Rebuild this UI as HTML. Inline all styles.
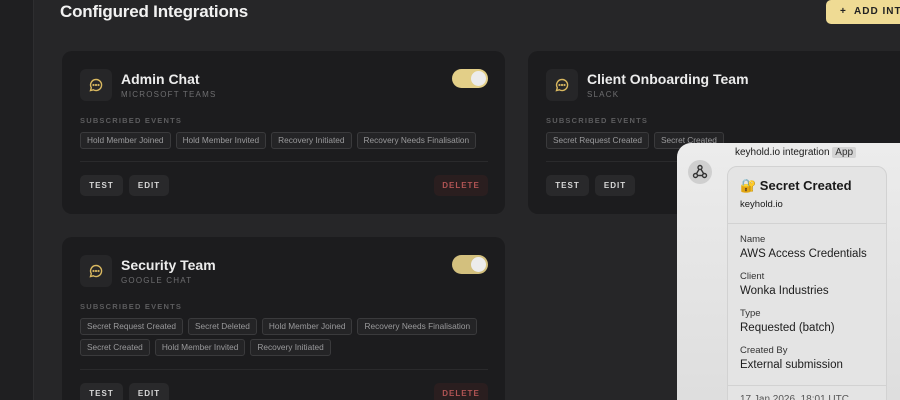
<!DOCTYPE html>
<html><head><meta charset="utf-8"><style>
*{box-sizing:border-box;margin:0;padding:0}
html,body{width:900px;height:400px;overflow:hidden}
body{background:#262628;font-family:"Liberation Sans",sans-serif;position:relative}
.side{position:absolute;left:0;top:0;width:34px;height:400px;background:#1f1f21;border-right:1px solid #2e2e30}
h1{position:absolute;left:60px;top:2px;font-size:17px;color:#f2f2f2;font-weight:bold;letter-spacing:-0.2px}
.add{position:absolute;left:826px;top:0;width:74px;height:24px;background:#efdb94;border-radius:5px 0 0 5px;color:#222;font-size:10px;font-weight:bold;letter-spacing:1px;padding:6px 0 0 14px;overflow:hidden;white-space:nowrap}
.card{position:absolute;background:#1c1c1e;border-radius:10px;overflow:hidden}
.ic{position:absolute;left:18px;top:18px;width:32px;height:32px;background:#262628;border-radius:6px}
.ic svg{position:absolute;left:8px;top:8px}
.tt{position:absolute;left:59px;top:20px;font-size:14px;font-weight:bold;color:#ececec}
.st{position:absolute;left:59px;top:39px;font-size:8px;color:#6e6e70;letter-spacing:1.2px}
.tg{position:absolute;left:390px;top:18px;width:36px;height:19px;background:#e3cf88;border-radius:10px}
.tg:after{content:"";position:absolute;right:2px;top:2px;width:15px;height:15px;border-radius:50%;background:#ececec}
.se{position:absolute;left:18px;font-size:7.5px;color:#5c5c5e;letter-spacing:1.2px;font-weight:bold}
.tags{position:absolute;left:18px;width:420px;font-size:0}
.t{display:inline-block;height:17px;border:1px solid #3a3a3c;background:#242426;border-radius:3px;color:#9a9a9c;font-size:8.3px;line-height:15px;padding:0 6px;margin:0 5px 4px 0}
.div{position:absolute;left:18px;width:408px;height:1px;background:#2a2a2c}
.b{position:absolute;height:21px;background:#29292b;border-radius:5px;color:#d8d8d8;font-size:8px;font-weight:bold;letter-spacing:1px;text-align:center;line-height:21px}
.del{background:#2a1e1f;color:#b05454}
.panel{position:absolute;left:677px;top:143px;width:223px;height:257px;background:linear-gradient(#ececec,#dedede);border-radius:14px 0 0 0;color:#1a1a1a;overflow:hidden}
.inner{position:absolute;left:50px;top:23px;width:160px;height:260px;border:1px solid #d2d2d2;border-radius:10px;background:#e4e4e4}
.lbl{font-size:9.5px;color:#333}
.val{font-size:11.5px;color:#1c1c1c;margin-bottom:11px;margin-top:3px}
</style></head><body>
<div class="side"></div>
<h1>Configured Integrations</h1>
<div class="add">+&nbsp; ADD INT</div>

<div class="card" style="left:62px;top:51px;width:443px;height:163px">
 <div class="ic"><svg width="16" height="16" viewBox="0 0 16 16" fill="none" stroke="#d9b860" stroke-width="1.4"><path d="M8 2.5a5.5 5.5 0 1 1-2.6 10.3L2.5 13.5l.8-2.8A5.5 5.5 0 0 1 8 2.5z"/><circle cx="5.5" cy="8" r=".4" fill="#d9b860"/><circle cx="8" cy="8" r=".4" fill="#d9b860"/><circle cx="10.5" cy="8" r=".4" fill="#d9b860"/></svg></div>
 <div class="tt">Admin Chat</div><div class="st">MICROSOFT TEAMS</div><div class="tg"></div>
 <div class="se" style="top:65px">SUBSCRIBED EVENTS</div>
 <div class="tags" style="top:81px"><span class="t">Hold Member Joined</span><span class="t">Hold Member Invited</span><span class="t">Recovery Initiated</span><span class="t">Recovery Needs Finalisation</span></div>
 <div class="div" style="top:110px"></div>
 <div class="b" style="left:18px;top:124px;width:43px">TEST</div>
 <div class="b" style="left:67px;top:124px;width:40px">EDIT</div>
 <div class="b del" style="left:372px;top:124px;width:54px">DELETE</div>
</div>

<div class="card" style="left:528px;top:51px;width:372px;height:163px;border-radius:10px 0 0 10px">
 <div class="ic"><svg width="16" height="16" viewBox="0 0 16 16" fill="none" stroke="#d9b860" stroke-width="1.4"><path d="M8 2.5a5.5 5.5 0 1 1-2.6 10.3L2.5 13.5l.8-2.8A5.5 5.5 0 0 1 8 2.5z"/><circle cx="5.5" cy="8" r=".4" fill="#d9b860"/><circle cx="8" cy="8" r=".4" fill="#d9b860"/><circle cx="10.5" cy="8" r=".4" fill="#d9b860"/></svg></div>
 <div class="tt">Client Onboarding Team</div><div class="st">SLACK</div>
 <div class="se" style="top:65px">SUBSCRIBED EVENTS</div>
 <div class="tags" style="top:81px"><span class="t">Secret Request Created</span><span class="t">Secret Created</span></div>
 <div class="div" style="top:110px"></div>
 <div class="b" style="left:18px;top:124px;width:43px">TEST</div>
 <div class="b" style="left:67px;top:124px;width:40px">EDIT</div>
</div>

<div class="card" style="left:62px;top:237px;width:443px;height:163px;border-radius:10px 10px 0 0">
 <div class="ic"><svg width="16" height="16" viewBox="0 0 16 16" fill="none" stroke="#d9b860" stroke-width="1.4"><path d="M8 2.5a5.5 5.5 0 1 1-2.6 10.3L2.5 13.5l.8-2.8A5.5 5.5 0 0 1 8 2.5z"/><circle cx="5.5" cy="8" r=".4" fill="#d9b860"/><circle cx="8" cy="8" r=".4" fill="#d9b860"/><circle cx="10.5" cy="8" r=".4" fill="#d9b860"/></svg></div>
 <div class="tt">Security Team</div><div class="st">GOOGLE CHAT</div><div class="tg" style="background:#d3c07e"></div>
 <div class="se" style="top:65px">SUBSCRIBED EVENTS</div>
 <div class="tags" style="top:81px"><span class="t">Secret Request Created</span><span class="t">Secret Deleted</span><span class="t">Hold Member Joined</span><span class="t">Recovery Needs Finalisation</span><br><span class="t">Secret Created</span><span class="t">Hold Member Invited</span><span class="t">Recovery Initiated</span></div>
 <div class="div" style="top:132px"></div>
 <div class="b" style="left:18px;top:146px;width:43px">TEST</div>
 <div class="b" style="left:67px;top:146px;width:40px">EDIT</div>
 <div class="b del" style="left:372px;top:146px;width:54px">DELETE</div>
</div>

<div class="panel">
 <div style="position:absolute;left:11px;top:17px;width:24px;height:24px;border-radius:50%;background:#cfcfcf"><svg width="24" height="24" viewBox="0 0 24 24" fill="none" stroke="#333" stroke-width="1.4"><circle cx="12" cy="7.5" r="2"/><circle cx="7.5" cy="15.5" r="2"/><circle cx="16.5" cy="15.5" r="2"/><path d="M11 9.3 8.3 14M9.5 15.5h5M13 9.3l2.7 4.4"/></svg></div>
 <div style="position:absolute;left:58px;top:4px;font-size:10px;color:#1a1a1a">keyhold.io integration <span style="background:#d4d4d4;padding:0 3px;border-radius:2px;color:#333">App</span></div>
 <div class="inner">
  <div style="padding:11px 12px 0;font-size:13px;font-weight:bold;color:#1a1a1a">🔐 Secret Created</div>
  <div style="padding:5px 12px;font-size:9.5px">keyhold.io</div>
  <div style="position:absolute;left:0;right:0;top:56px;height:1px;background:#d2d2d2"></div>
  <div style="position:absolute;left:12px;top:67px">
   <div class="lbl">Name</div><div class="val">AWS Access Credentials</div>
   <div class="lbl">Client</div><div class="val">Wonka Industries</div>
   <div class="lbl">Type</div><div class="val">Requested (batch)</div>
   <div class="lbl">Created By</div><div class="val">External submission</div>
  </div>
  <div style="position:absolute;left:0;right:0;top:218px;height:1px;background:#d2d2d2"></div>
  <div style="position:absolute;left:12px;top:227px;font-size:10px;color:#555">17 Jan 2026, 18:01 UTC</div>
 </div>
</div>
</body></html>
